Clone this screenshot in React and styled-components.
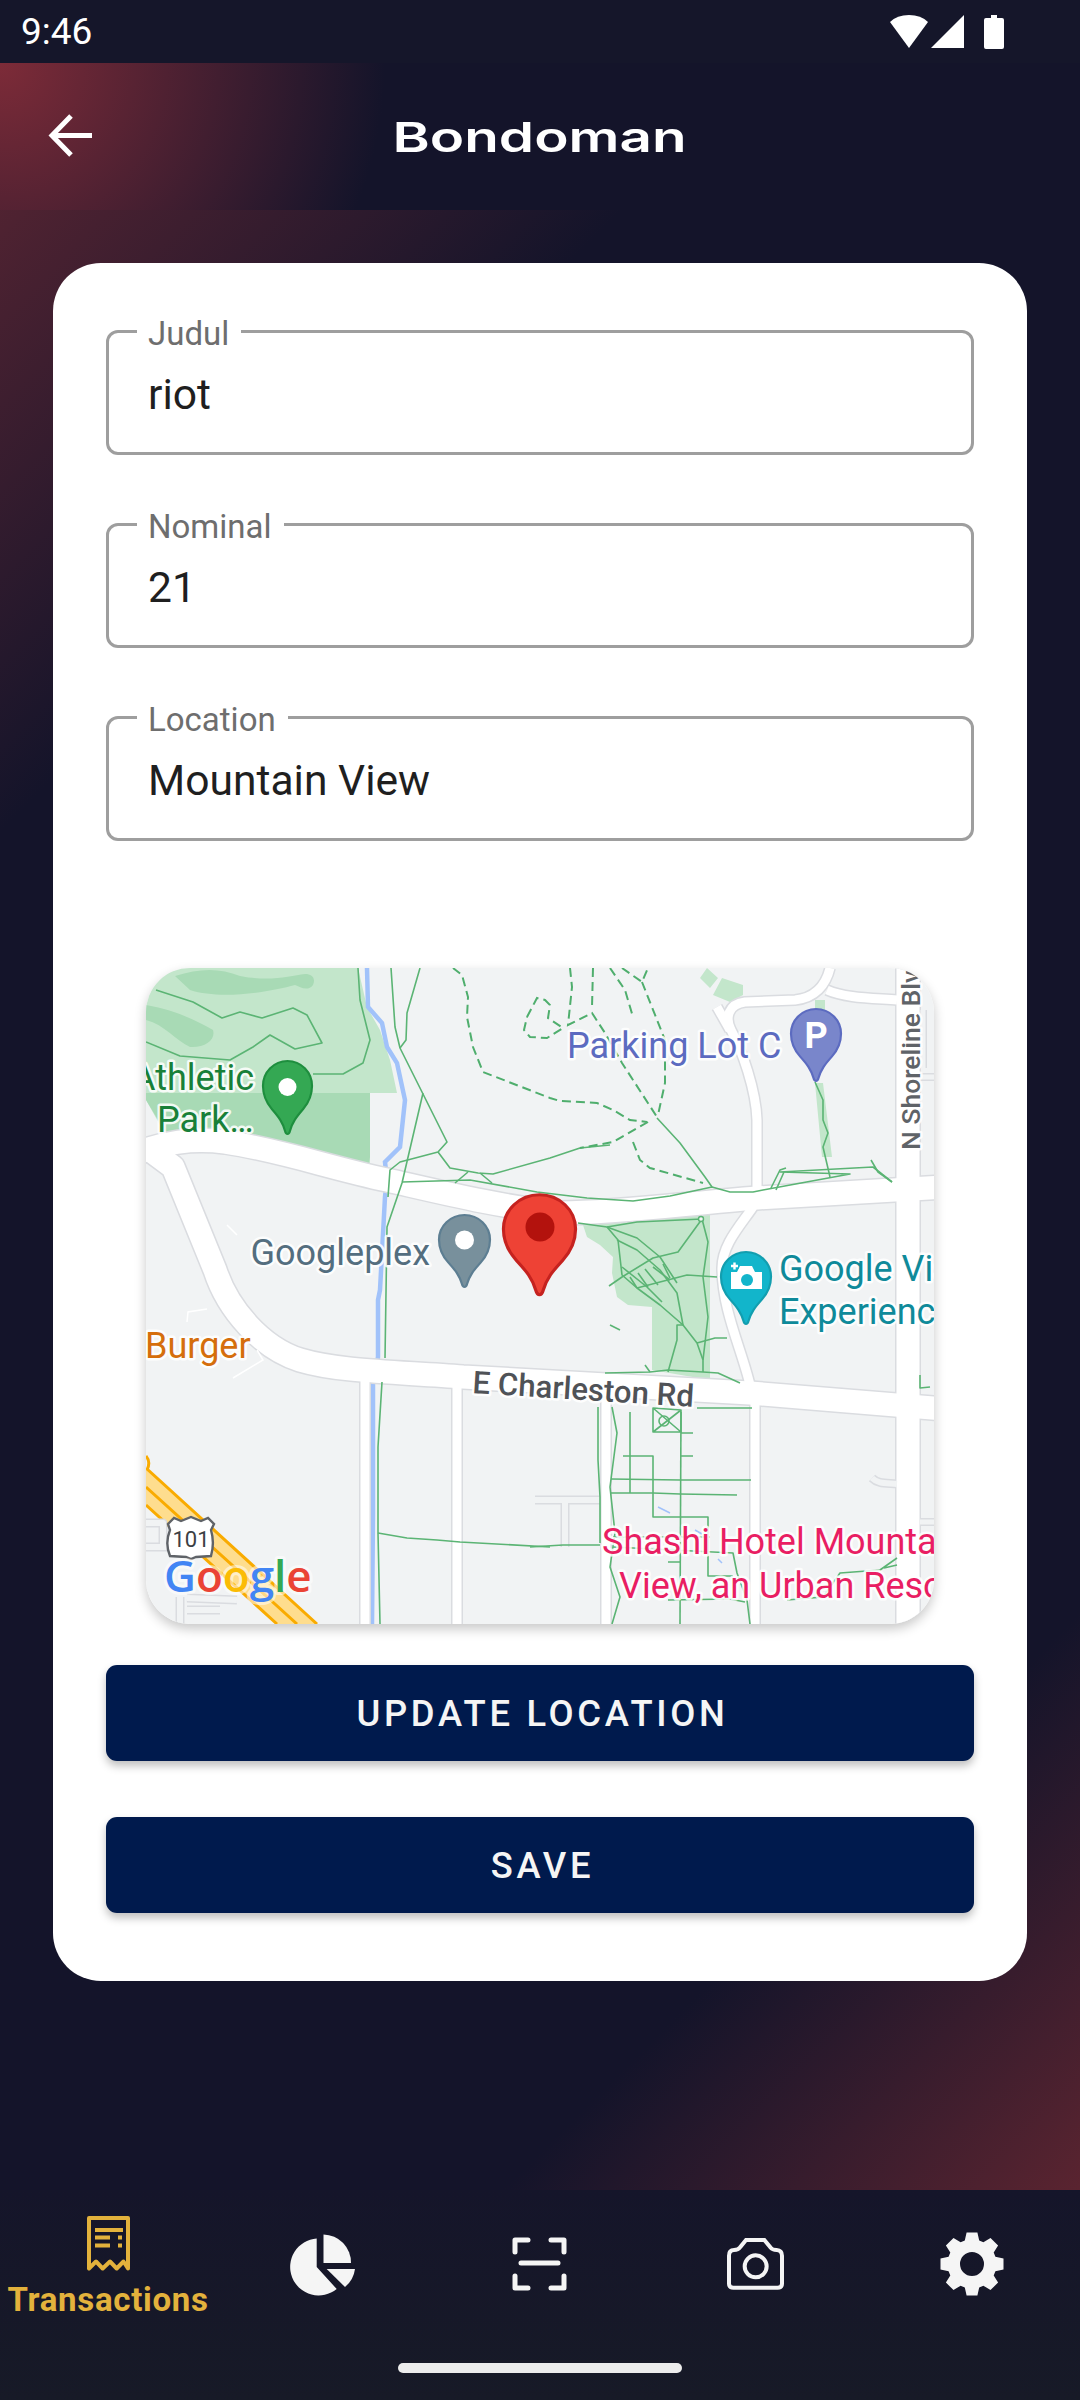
import React from "react";
import styled, { createGlobalStyle } from "styled-components";

const GlobalStyle = createGlobalStyle`
  * {
    box-sizing: border-box;
  }
  html,
  body {
    margin: 0;
    padding: 0;
    background: #14142a;
  }
`;

// map geometry is kept in page pixels, the viewBox below starts at the map's corner
const ROADS = [
  { w: 23, d: "M140 1152 C165 1143 190 1138 225 1142 C280 1150 330 1168 387 1180 C440 1192 500 1207 560 1213 C620 1213 690 1203 757 1198 L945 1187" },
  { w: 23, d: "M150 1150 L173 1167 L215 1270 C228 1310 262 1348 300 1360 C340 1372 400 1372 463 1377 L750 1393 L945 1409" },
  { w: 23, d: "M908 960 L908 1630" },
  { w: 9, d: "M730 1030 L717 1007" },
  { w: 9, d: "M757 1198 L757 1120 C756 1090 742 1050 731 1030 C725 1018 728 1004 745 1002 L795 1000 C815 998 826 985 830 968" },
  { w: 9, d: "M827 990 C845 998 870 998 897 1000" },
  { w: 9, d: "M753 1207 C740 1226 722 1245 722 1268 C722 1310 742 1350 750 1385" },
  { w: 9, d: "M755 1400 L755 1624" },
  { w: 9, d: "M365 1375 L365 1624" },
  { w: 9, d: "M457 1380 L457 1624" },
  { w: 9, d: "M606 1400 L606 1624" },
  { w: 6, d: "M535 1500 L600 1500 M565 1500 L565 1547" },
  { w: 6, d: "M872 1478 C878 1484 885 1483 897 1484" },
  { w: 6, d: "M146 1523 L163 1523 L163 1547 M146 1547 L170 1547" },
  { w: 6, d: "M180 1597 L180 1624 M187 1598 L237 1600 M187 1610 L220 1610" },
  { w: 5, d: "M923 1010 L923 1068 M920 1077 L934 1077 M920 1522 L934 1522" },
];

const TRAILS = [
  "M156 990 L193 1002 L222 1018 L240 1012 L262 1018 L293 1008 L307 1015 L322 1043 L295 1049 L270 1035 L253 1047 L230 1060 L180 1056 L146 1042",
  "M358 968 L360 1000 L370 1040 L363 1063 L343 1074 L313 1074",
  "M391 968 L395 1027 L400 1048 L447 1142 L438 1152 L400 1162 L390 1170 L388 1197",
  "M420 968 L407 1013 L406 1040 L400 1048",
  "M423 1093 L402 1183 L387 1227 L385 1358 M382 1382 L378 1447 L378 1533 L380 1624",
  "M438 1152 L450 1168 L478 1173 L493 1174 L550 1158 L580 1148 L610 1145",
  "M402 1182 L470 1180 L537 1192 L587 1198 L633 1201 L670 1196 L712 1187 L730 1192 L753 1192 L763 1190 L850 1174 L780 1172 L873 1167 L892 1182",
  "M455 1183 L468 1172 M480 1173 L492 1183",
  "M657 1118 L680 1143 L705 1177 L712 1187",
  "M771 1188 L780 1170 L786 1168 M776 1190 L784 1172",
  "M815 1082 L823 1100 L823 1120 L828 1133 L823 1147 L830 1177",
  "M871 1160 L878 1172 L892 1182",
  // park by the pin
  "M578 1223 L607 1227 L637 1222 L702 1219 L678 1252 L653 1258 L622 1277 L609 1286",
  "M607 1227 L618 1240 L622 1275 L637 1288 L660 1305 L683 1325 L697 1343 L703 1360 L703 1372",
  "M702 1219 L708 1242 L703 1277 L708 1317 L703 1360",
  "M617 1240 L637 1250 L660 1270 L677 1293 L683 1325 L677 1325 L677 1340 L668 1372",
  "M607 1227 L637 1238 L660 1257 L677 1283",
  "M622 1267 L647 1287 L662 1302",
  "M637 1288 L660 1282 L687 1275 L717 1277",
  "M630 1277 L637 1288 M638 1273 L648 1287 M645 1269 L658 1285 M653 1267 L670 1280 M663 1264 L670 1278",
  "M697 1343 L715 1338 L727 1338",
  "M605 1373 L650 1372 L668 1370 L703 1372 L718 1373 L740 1383",
  "M645 1365 L650 1372 M610 1325 L620 1330",
  // south of Charleston
  "M697 1408 L752 1408",
  "M653 1408 L653 1432 L681 1432 L681 1410 Z M653 1408 L681 1432 M681 1410 L653 1432 M681 1433 L693 1433 M681 1456 L693 1456",
  "M630 1412 L630 1493 M623 1456 L653 1456 L653 1517 L708 1517 L708 1576 L733 1576",
  "M611 1479 L680 1480 L751 1480 M611 1493 L653 1493 L680 1494 L737 1495",
  "M681 1412 L680 1624",
  "M598 1407 L598 1460 L600 1497 L600 1543",
  "M612 1407 L617 1433 L610 1487 L615 1533 L610 1567 L620 1597 L612 1624",
  "M530 1547 L563 1545 L600 1545",
  "M378 1533 L407 1538 L437 1540 L460 1542 L550 1547",
  "M613 1537 L710 1537 M613 1547 L733 1553 L737 1573 L747 1600 L750 1624",
  "M668 1562 L680 1562 M668 1600 L730 1599 L745 1602",
  "M787 1600 L823 1597 L840 1573 L880 1570 L897 1558 M884 1568 L897 1565",
  "M920 1375 L920 1388 L930 1387",
];

const DASHED = [
  "M453 968 L462 975 L468 997 L467 1017 L473 1047 L483 1072 L550 1098 L560 1101 L597 1103 L613 1110 L630 1120 L647 1122",
  "M527 1017 L537 998 L545 1000 L550 1005 L548 1018 L563 1028 L547 1038 L530 1037 L524 1030 L527 1017",
  "M570 968 L572 987 L568 1025 L592 1013 L605 1033 L622 1063 L657 1117",
  "M593 968 L592 1007",
  "M610 968 L625 990 L633 1017",
  "M622 968 L642 982 L648 968 M642 982 L665 1040 L665 1083 L658 1115",
  "M648 1122 L613 1142 L580 1148",
  "M633 1142 L640 1160 L650 1168 L703 1183",
];

const PIN_PATH =
  "M26 75C25 75 24 74 23.5 72C21 63 17 58 10 50C4 43 1 35 1 27A25 25 0 1 1 51 27C51 35 48 43 42 50C35 58 31 63 28.5 72C28 74 27 75 26 75Z";

function Pin({ x, y, w, h, fill, stroke, children }) {
  return (
    <g transform={`translate(${x} ${y})`}>
      <path
        d={PIN_PATH}
        transform={`scale(${w / 52} ${h / 76})`}
        fill={fill}
        stroke={stroke}
        strokeWidth="2.2"
      />
      {children}
    </g>
  );
}

function MapDrawing() {
  return (
    <MapSvg viewBox="146 968 788 656">
      <rect x="146" y="968" width="788" height="656" fill="#f1f3f4" />

      {/* parks */}
      <path
        d="M146 968H358L367 1007L380 1030L390 1060L397 1093L370 1093L370 1170L256 1143L170 1143L146 1100Z"
        fill="#c3e6cb"
      />
      <path
        d="M146 1093 L146 1100 L172 1143 L256 1143 L367 1172 L370 1157 L370 1093Z M260 1093 L370 1093"
        fill="#a8dab5"
      />
      <path
        d="M175 976 C200 968 220 968 240 976 C270 982 290 976 305 974 C312 974 316 978 313 985 C308 992 300 987 295 985 C270 992 220 1000 190 990Z M146 1005 C175 1010 195 1020 213 1030 C216 1040 205 1048 190 1047 C175 1040 165 1025 146 1020Z"
        fill="#a8dab5"
      />
      <path
        d="M583 1225L710 1213L710 1380L652 1370L652 1307L628 1305L617 1297L612 1273L613 1257L600 1245L587 1237Z"
        fill="#c3e6cb"
      />
      <path
        d="M707 968L718 978L710 988L700 978Z M722 978L743 985L743 995L730 1002L713 995Z M815 1083L823 1083L832 1157L822 1157Z M815 1000L825 1000L825 1012L815 1012Z"
        fill="#c3e6cb"
      />

      {/* highway */}
      <path d="M146 1468L317 1624L277 1624L146 1505Z" fill="#fedd8e" />
      <path
        d="M146 1468L317 1624M146 1487L297 1624M146 1505L277 1624M146 1456Q151 1462 147 1470"
        stroke="#f9ab00"
        strokeWidth="3"
        fill="none"
      />

      {/* creek */}
      <path
        d="M367 968L368 1007L382 1023L387 1047L397 1063L405 1100L400 1147L385 1162L387 1180L385 1197L380 1290L378 1300L378 1357L373 1383L373 1513L372 1624"
        stroke="#a1c2fa"
        strokeWidth="4.5"
        fill="none"
      />
      <path
        d="M658 1507L670 1513M695 1530L702 1534M718 1559L722 1563"
        stroke="#a1c2fa"
        strokeWidth="1.5"
        fill="none"
      />

      {ROADS.map((r) => (
        <path key={r.d} d={r.d} fill="none" stroke="#dadce0" strokeWidth={r.w + 3} strokeLinejoin="round" />
      ))}
      {ROADS.map((r) => (
        <path
          key={r.d}
          d={r.d}
          fill="none"
          stroke={r.w > 6 ? "#ffffff" : "#f1f3f4"}
          strokeWidth={r.w}
          strokeLinejoin="round"
        />
      ))}
      <path d="M233 1378L263 1360L257 1350M187 1322L188 1312L207 1309M227 1225L237 1235" stroke="#fff" strokeWidth="1.5" fill="none" />

      {TRAILS.map((d) => (
        <path key={d} d={d} fill="none" stroke="#5bb474" strokeWidth="1.6" strokeLinejoin="round" />
      ))}
      {DASHED.map((d) => (
        <path key={d} d={d} fill="none" stroke="#4fae6d" strokeWidth="2" strokeDasharray="9 5" />
      ))}
      <circle cx="664" cy="1421" r="5" fill="none" stroke="#5bb474" strokeWidth="1.6" />
      <circle cx="701" cy="1219" r="2.5" fill="#f1f3f4" stroke="#5bb474" strokeWidth="1.4" />

      <MapLabel x="132" y="1090" fill="#188038">Athletic</MapLabel>
      <MapLabel x="157" y="1132" fill="#188038">Park…</MapLabel>
      <MapLabel x="250.5" y="1265" fill="#546e7f">Googleplex</MapLabel>
      <MapLabel x="567" y="1058" fill="#5c6bc0">Parking Lot C</MapLabel>
      <MapLabel x="779" y="1281" fill="#0f8a9a">Google Visitor</MapLabel>
      <MapLabel x="779" y="1324" fill="#0f8a9a">Experience</MapLabel>
      <MapLabel x="145" y="1358" fill="#d56e0c">Burger</MapLabel>
      <MapLabel x="602" y="1554" fill="#e91e63">Shashi Hotel Mountain</MapLabel>
      <MapLabel x="619" y="1598" fill="#e91e63">View, an Urban Resort</MapLabel>
      <RoadLabel $size={31.2} transform="translate(472 1393) rotate(3.6)" fill="#4f5257">E Charleston Rd</RoadLabel>
      <RoadLabel $size={26.5} transform="translate(920 1150) rotate(-90)" fill="#5f6368">N Shoreline Blvd</RoadLabel>

      <Pin x={262} y={1059} w={51} h={76} fill="#34a853" stroke="#1e8e3e">
        <circle cx="25.5" cy="28" r="9" fill="#fff" />
      </Pin>
      <Pin x={438} y={1213} w={53} h={75} fill="#78909c" stroke="#5d7e92">
        <circle cx="26.5" cy="27" r="9.5" fill="#fff" />
      </Pin>
      <Pin x={790} y={1007} w={52} h={75} fill="#7986cb" stroke="#5c6bc0">
        <PinLetter x="26" y="41">P</PinLetter>
      </Pin>
      <Pin x={720} y={1250} w={52} h={75} fill="#12b5cb" stroke="#129eaf">
        <path d="M11 22H17L20 16H32L35 22H42V39H11Z" fill="#fff" />
        <circle cx="27" cy="30" r="6" fill="#12b5cb" />
        <path d="M11 16H19M15 12V20" stroke="#12b5cb" strokeWidth="5" />
        <path d="M11 16H18M14.5 12.5V19.5" stroke="#fff" strokeWidth="2.4" />
      </Pin>
      <Pin x={502} y={1192} w={75} h={104} fill="#ee4235" stroke="#c5221f">
        <circle cx="38" cy="35" r="14.5" fill="#b3120d" />
      </Pin>

      <path
        d="M168 1524L174 1518L181 1521L191 1517L201 1521L208 1518L214 1524L211 1530C214 1540 213 1549 211 1556L196 1557L191 1559L186 1557L170 1556C167 1549 166 1540 170 1530Z"
        fill="#fff"
        stroke="#5f6368"
        strokeWidth="2.4"
      />
      <ShieldText x="191" y="1547">101</ShieldText>

      <GoogleMark x="164" y="1592">
        <tspan fill="#4285f4">G</tspan>
        <tspan fill="#ea4335">o</tspan>
        <tspan fill="#fbbc04">o</tspan>
        <tspan fill="#4285f4">g</tspan>
        <tspan fill="#34a853">l</tspan>
        <tspan fill="#ea4335">e</tspan>
      </GoogleMark>
    </MapSvg>
  );
}

function gearPath(cx, cy) {
  // eight teeth, hole cut with evenodd
  const parts = [];
  for (let i = 0; i < 8; i++) {
    const a = (i * Math.PI) / 4 - Math.PI / 2;
    const pt = (r, off) => {
      const t = a + off;
      return `${(cx + r * Math.cos(t)).toFixed(1)} ${(cy + r * Math.sin(t)).toFixed(1)}`;
    };
    parts.push(`${i === 0 ? "M" : "L"}${pt(24.5, -0.3)}`);
    parts.push(`L${pt(32, -0.17)}`);
    parts.push(`L${pt(32, 0.17)}`);
    parts.push(`L${pt(24.5, 0.3)}`);
  }
  parts.push("Z");
  parts.push(`M${cx - 12} ${cy}a12 12 0 1 0 24 0a12 12 0 1 0 -24 0Z`);
  return parts.join("");
}

function Field({ label, value }) {
  return (
    <FieldBox>
      <FieldLabel>{label}</FieldLabel>
      <FieldInput readOnly value={value} />
    </FieldBox>
  );
}

export default function App() {
  return (
    <Screen>
      <GlobalStyle />
      <StatusBar>
        <Clock>9:46</Clock>
        <StatusIcons viewBox="890 10 120 42">
          <path d="M912 47L893 21Q900 14 912 14Q924 14 931 21Z" fill="#fff" />
          <path d="M967 14V47H934Z" fill="#fff" />
          <path d="M994 17V14H1000V17H1005Q1007 17 1007 19V46Q1007 48 1005 48H989Q987 48 987 46V19Q987 17 989 17Z" fill="#fff" />
        </StatusIcons>
      </StatusBar>

      <Body>
        <AppBar>
          <BackIcon viewBox="0 0 50 46" fill="none" stroke="#fff" strokeWidth="5">
            <path d="M45 22.5H6M24 3L5 22.5L24 42" />
          </BackIcon>
          <Title>Bondoman</Title>
        </AppBar>

        <Card>
          <Fields>
            <Field label="Judul" value="riot" />
            <Field label="Nominal" value="21" />
            <Field label="Location" value="Mountain View" />
          </Fields>
          <MapFrame>
            <MapDrawing />
          </MapFrame>
          <Actions>
            <ActionButton>Update location</ActionButton>
            <ActionButton>Save</ActionButton>
          </Actions>
        </Card>
      </Body>

      <BottomNav>
        <NavRow>
          <NavItem $active>
            <svg width="43" height="55" viewBox="0 0 43 55" fill="none">
              <path
                d="M2 2H41V52.5L36.5 45.5L29.7 52.5L23 45.5L15.7 52.5L9 45.5L2 52.5Z"
                stroke="#e3b23c"
                strokeWidth="4"
                strokeLinejoin="round"
              />
              <path
                d="M8 12H36V16H8ZM8 19.5H23V23.5H8ZM8 27.5H23V31.5H8ZM31 19.5H35V23.5H31ZM31 27.5H35V31.5H31Z"
                fill="#e3b23c"
              />
            </svg>
            <NavLabel>Transactions</NavLabel>
          </NavItem>
          <NavItem>
            <svg width="68" height="66" viewBox="290 2230 68 66" fill="#f5f5f5">
              <path d="M323.5 2233.5A28 28 0 0 1 351 2262H323.5Z" />
              <path d="M316.7 2237.5A28.5 28.5 0 1 0 336.7 2288L316.7 2266Z" />
              <path d="M326.7 2268H355A28 28 0 0 1 345 2286Z" />
            </svg>
          </NavItem>
          <NavItem>
            <svg width="56" height="56" viewBox="512 2236 56 56" fill="none" stroke="#f5f5f5" strokeWidth="5" strokeLinecap="round" strokeLinejoin="round">
              <path d="M515 2252V2240H528M551 2240H564V2252M515 2276V2288H528M551 2288H564V2276M521 2263H558" />
            </svg>
          </NavItem>
          <NavItem>
            <svg width="60" height="54" viewBox="678 80 180 162" fill="none" stroke="#f5f5f5" strokeWidth="12">
              <path d="M702 119Q715 119 721 110L738 89H793L811 111Q817 119 830 119Q846 120 846 136V220Q846 232 833 232H700Q687 232 687 220V136Q687 119 702 119Z" />
              <circle cx="767" cy="168" r="33" />
            </svg>
          </NavItem>
          <NavItem>
            <svg width="66" height="66" viewBox="0 0 66 66">
              <path d={gearPath(33, 33)} fill="#f5f5f5" fillRule="evenodd" />
            </svg>
          </NavItem>
        </NavRow>
        <GestureBar />
      </BottomNav>
    </Screen>
  );
}

const Screen = styled.div`
  width: 1080px;
  height: 2400px;
  display: flex;
  flex-direction: column;
  overflow: hidden;
  font-family: Roboto, "Liberation Sans", sans-serif;
`;

const StatusBar = styled.div`
  height: 63px;
  flex: none;
  display: flex;
  align-items: center;
  justify-content: space-between;
  padding: 0 70px 0 21px;
  background: #15162a;
`;

const Clock = styled.span`
  color: #fff;
  font-size: 37px;
  line-height: 65px;
`;

const StatusIcons = styled.svg`
  width: 120px;
  height: 42px;
  margin-right: 3px;
  margin-top: 1px;
`;

const Body = styled.div`
  flex: 1;
  background: linear-gradient(135deg, #5e2633 0%, #14142a 24%, #14142a 82%, #5a2430 100%);
`;

const AppBar = styled.div`
  height: 147px;
  position: relative;
  display: flex;
  align-items: center;
  justify-content: center;
  background: radial-gradient(circle 385px at 0 0, #7d2b38 0%, #14142a 100%);
`;

const BackIcon = styled.svg`
  position: absolute;
  left: 47px;
  top: 50px;
  width: 50px;
  height: 46px;
`;

const Title = styled.span`
  display: inline-block;
  color: #fff;
  font-family: Inter, "Liberation Sans", sans-serif;
  font-size: 41px;
  font-weight: 600;
  transform: scaleX(1.38);
`;

const Card = styled.div`
  width: 974px;
  margin: 53px auto 0;
  padding: 67px 53px 68px;
  display: flex;
  flex-direction: column;
  background: #fff;
  border-radius: 48px;
`;

const Fields = styled.div`
  display: flex;
  flex-direction: column;
  gap: 68px;
`;

const FieldBox = styled.div`
  position: relative;
  height: 125px;
  border: 3px solid #9e9e9e;
  border-radius: 12px;
`;

const FieldLabel = styled.label`
  position: absolute;
  top: -16px;
  left: 28px;
  padding: 0 12px 0 11px;
  background: #fff;
  color: #6e6e6e;
  font-size: 33px;
  line-height: 33px;
`;

const FieldInput = styled.input`
  width: 100%;
  height: 100%;
  padding: 3px 39px 0;
  border: 0;
  outline: 0;
  background: transparent;
  color: #1f1f1f;
  font-family: Roboto, "Liberation Sans", sans-serif;
  font-size: 42.6px;
`;

const MapFrame = styled.div`
  height: 656px;
  margin: 127px 40px 0;
  border-radius: 44px;
  overflow: hidden;
  box-shadow: 0 5px 12px rgba(0, 0, 0, 0.22);
`;

const MapSvg = styled.svg`
  display: block;
  width: 788px;
  height: 656px;
`;

const MapLabel = styled.text`
  font-family: Roboto, "Liberation Sans", sans-serif;
  font-size: 36px;
  paint-order: stroke;
  stroke: rgba(255, 255, 255, 0.85);
  stroke-width: 5px;
  stroke-linejoin: round;
`;

const RoadLabel = styled.text`
  font-family: Roboto, "Liberation Sans", sans-serif;
  font-size: ${(p) => p.$size}px;
  font-weight: 500;
  paint-order: stroke;
  stroke: rgba(255, 255, 255, 0.9);
  stroke-width: 5px;
  stroke-linejoin: round;
`;

const PinLetter = styled.text`
  font-family: Roboto, "Liberation Sans", sans-serif;
  font-size: 36px;
  font-weight: 700;
  fill: #fff;
  text-anchor: middle;
`;

const ShieldText = styled.text`
  font-family: Roboto, "Liberation Sans", sans-serif;
  font-size: 22px;
  fill: #3c4043;
  text-anchor: middle;
`;

const GoogleMark = styled.text`
  font-family: "Open Sans", Roboto, sans-serif;
  font-size: 44px;
  font-weight: 600;
  paint-order: stroke;
  stroke: rgba(255, 255, 255, 0.55);
  stroke-width: 6px;
  stroke-linejoin: round;
`;

const Actions = styled.div`
  display: flex;
  flex-direction: column;
  gap: 56px;
  margin-top: 41px;
`;

const ActionButton = styled.button`
  height: 96px;
  padding: 0 0 0 5px;
  border: 0;
  border-radius: 11px;
  background: #001a4d;
  color: #f5f5f5;
  font-family: Roboto, "Liberation Sans", sans-serif;
  font-size: 36.4px;
  font-weight: 500;
  letter-spacing: 3.7px;
  text-transform: uppercase;
  box-shadow: 0 5px 8px rgba(0, 0, 0, 0.25);
`;

const BottomNav = styled.div`
  height: 210px;
  flex: none;
  display: flex;
  flex-direction: column;
  background: linear-gradient(180deg, #15152a 0%, #171a27 100%);
`;

const NavRow = styled.div`
  height: 148px;
  display: grid;
  grid-template-columns: repeat(5, 1fr);
`;

const NavItem = styled.div`
  display: flex;
  flex-direction: column;
  align-items: center;
  justify-content: center;
  padding-top: ${(p) => (p.$active ? "6px" : "0")};
`;

const NavLabel = styled.span`
  margin-top: 10px;
  color: #e3b23c;
  font-size: 33px;
  font-weight: 700;
  line-height: 38px;
  letter-spacing: 0.7px;
  white-space: nowrap;
`;

const GestureBar = styled.div`
  width: 284px;
  height: 10px;
  margin: 25px auto 0;
  border-radius: 5px;
  background: #ececec;
`;
